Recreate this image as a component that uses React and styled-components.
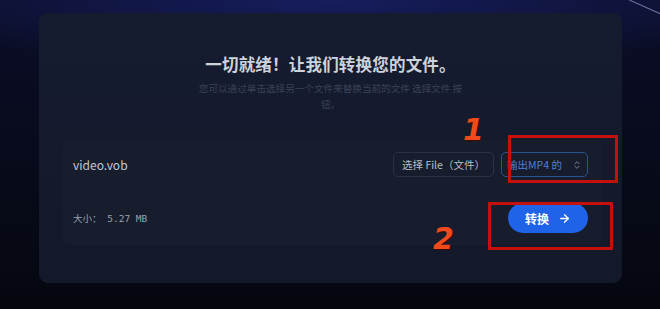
import React from 'react';
import styled, { createGlobalStyle } from 'styled-components';
import { ChevronsUpDown, ArrowRight } from 'lucide-react';

const GlobalStyle = createGlobalStyle`
  html, body {
    margin: 0;
    padding: 0;
    background: #05070f;
  }
  body {
    font-family: "Noto Sans CJK SC", "Noto Sans", sans-serif;
  }
`;

const Page = styled.div`
  position: relative;
  width: 660px;
  height: 309px;
  box-sizing: border-box;
  padding: 13px 38px 26px 39px;
  overflow: hidden;
  background:
    radial-gradient(ellipse 460px 70px at 330px 0px, rgba(30, 40, 130, 0.6), transparent),
    linear-gradient(180deg, #0b0e28 0%, #05070f 100%);
`;

const Streak = styled.div`
  position: absolute;
  top: -2px;
  left: 626px;
  width: 50px;
  height: 1px;
  background: rgba(170, 180, 230, 0.6);
  transform: rotate(24deg);
  transform-origin: left center;
`;

const Card = styled.section`
  height: 100%;
  box-sizing: border-box;
  padding-top: 39px;
  border-radius: 9px;
  background: linear-gradient(180deg, #161c30 0%, #131929 100%);
  display: flex;
  flex-direction: column;
  align-items: center;
`;

const Title = styled.h1`
  margin: 0;
  font-size: 16.5px;
  line-height: 24px;
  font-weight: 700;
  color: #cdd2db;
  letter-spacing: 0.2px;
`;

const Subtitle = styled.p`
  margin: 4px 0 0;
  width: 272px;
  font-size: 9.6px;
  line-height: 16px;
  color: #394256;
  text-align: center;
`;

const FileCard = styled.div`
  align-self: stretch;
  margin: 28px 20px 0 24px;
  height: 105px;
  box-sizing: border-box;
  padding: 12px 14px 12px 10px;
  border-radius: 5px;
  background: #171d2c;
  display: flex;
  flex-direction: column;
  justify-content: space-between;
`;

const Row = styled.div`
  display: flex;
  align-items: center;
  justify-content: space-between;
  height: ${p => p.$h}px;
`;

const FileName = styled.span`
  font-size: 12px;
  color: #c3c8d1;
`;

const Actions = styled.div`
  display: flex;
  gap: 7px;
`;

const OutlineButton = styled.button`
  height: 25px;
  width: ${p => p.$w}px;
  box-sizing: border-box;
  padding: 0 4px;
  border-radius: 5px;
  border: 1px solid ${p => (p.$accent ? '#2c528f' : '#2a3242')};
  background: transparent;
  color: ${p => (p.$accent ? '#4f7fd8' : '#b9bec8')};
  font-family: inherit;
  font-size: 10.5px;
  white-space: nowrap;
  display: flex;
  align-items: center;
  justify-content: center;
  gap: 10px;
`;

const SizeText = styled.span`
  font-family: "DejaVu Sans Mono", "Noto Sans CJK SC", monospace;
  font-size: 9.5px;
  color: #9ba1ac;
`;

const ConvertButton = styled.button`
  width: 80px;
  height: 30px;
  border: none;
  border-radius: 15px;
  background: #1f63e9;
  color: #ffffff;
  font-family: inherit;
  font-size: 12px;
  font-weight: 700;
  display: flex;
  align-items: center;
  justify-content: center;
  gap: 9px;
`;

const RedBox = styled.div`
  position: absolute;
  box-sizing: border-box;
  border: 3px solid #c4110e;
  left: ${p => p.$x}px;
  top: ${p => p.$y}px;
  width: ${p => p.$w}px;
  height: ${p => p.$h}px;
`;

const Marker = styled.span`
  position: absolute;
  left: ${p => p.$x}px;
  top: ${p => p.$y}px;
  font-family: "DejaVu Sans", sans-serif;
  font-size: 30px;
  line-height: 30px;
  font-weight: 700;
  font-style: italic;
  color: #ef4a1c;
  text-shadow: 1px 1px 0 #3a0a04;
`;

export default function App() {
  return (
    <>
      <GlobalStyle />
      <Page>
        <Streak />
        <Card>
          <Title>一切就绪！让我们转换您的文件。</Title>
          <Subtitle>您可以通过单击选择另一个文件来替换当前的文件 选择文件 按钮。</Subtitle>
          <FileCard>
            <Row $h={25}>
              <FileName>video.vob</FileName>
              <Actions>
                <OutlineButton $w={101}>选择 File（文件）</OutlineButton>
                <OutlineButton $w={87} $accent>
                  输出MP4 的
                  <ChevronsUpDown size={10} color="#8e98ad" strokeWidth={2} />
                </OutlineButton>
              </Actions>
            </Row>
            <Row $h={30}>
              <SizeText>大小： 5.27 MB</SizeText>
              <ConvertButton>
                转换
                <ArrowRight size={13} strokeWidth={2.4} />
              </ConvertButton>
            </Row>
          </FileCard>
        </Card>
        <RedBox $x={508} $y={135} $w={110} $h={48} />
        <RedBox $x={488} $y={202} $w={125} $h={48} />
        <Marker $x={463} $y={115}>1</Marker>
        <Marker $x={433} $y={224}>2</Marker>
      </Page>
    </>
  );
}
